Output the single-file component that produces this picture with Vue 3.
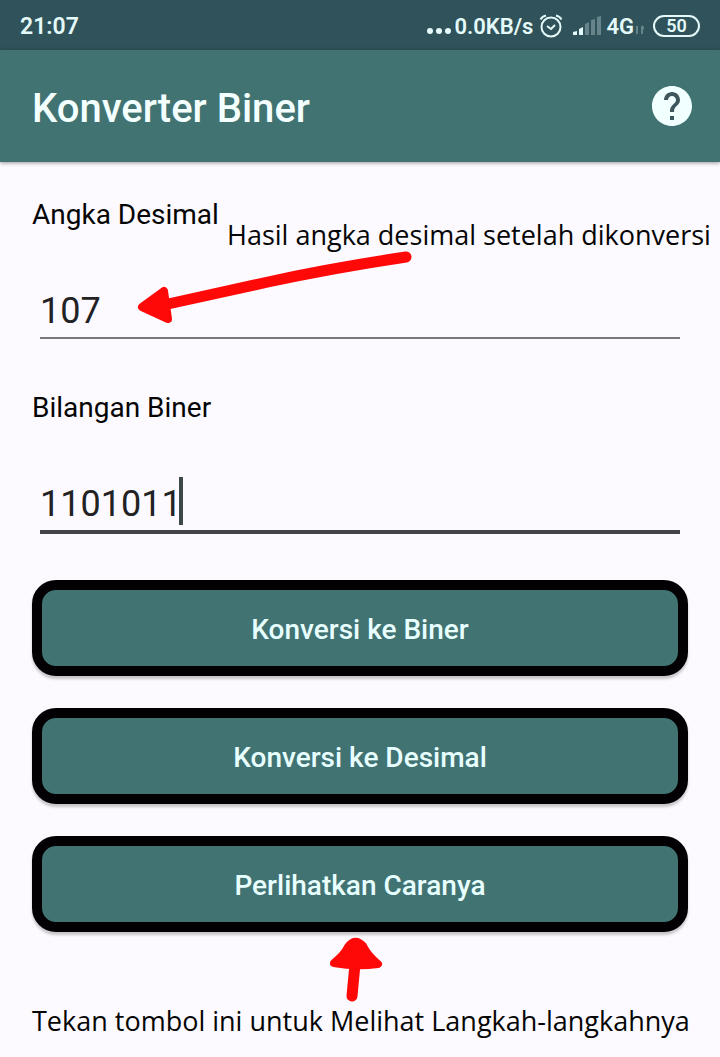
<script setup>
import { ref } from 'vue'

const decimal = ref('107')
const binary = ref('1101011')

function toBinary() {
  const n = parseInt(decimal.value, 10)
  if (!Number.isNaN(n)) binary.value = n.toString(2)
}

function toDecimal() {
  const n = parseInt(binary.value, 2)
  if (!Number.isNaN(n)) decimal.value = String(n)
}
</script>

<template>
  <div class="screen">
    <div class="status">
      <span>21:07</span>
      <div class="indicators">
        <svg class="dots" width="26" height="24" viewBox="0 0 26 24" aria-hidden="true">
          <circle cx="4" cy="17" r="3" /><circle cx="13" cy="17" r="3" /><circle cx="22" cy="17" r="3" />
        </svg>
        <span>0.0KB/s</span>
        <svg class="alarm" width="24" height="24" viewBox="0 0 24 24" aria-hidden="true">
          <circle cx="12" cy="13" r="9.5" />
          <path d="M1.500 5.500Q3 2.500 7 1.500M17 1.500Q21 2.500 22.500 5.500M8 12l4 3 4-4" />
        </svg>
        <svg class="signal" width="28" height="20" viewBox="0 0 28 20" aria-hidden="true">
          <path d="M0 19v-3l4-1v4zM6 19v-6l4-2v8z" />
          <path class="faint" d="M12 19V8l4-2v13zM18 19V4l4-1v16zM24 19V1l4-1v19z" />
        </svg>
        <span>4G</span>
        <svg class="data" width="8" height="20" viewBox="0 0 8 20" aria-hidden="true">
          <path d="M1 18v-8M0 15l1 3M6 18v-8M6 10l2 3" />
        </svg>
        <span class="battery">50</span>
      </div>
    </div>

    <header class="bar">
      <h1>Konverter Biner</h1>
      <button class="help" type="button" aria-label="Bantuan">
        <svg width="48" height="48" viewBox="0 0 24 24" aria-hidden="true">
          <circle class="mark" cx="12" cy="12" r="9" />
          <path d="M12 2C6.480 2 2 6.480 2 12s4.480 10 10 10 10-4.480 10-10S17.520 2 12 2zm1 17h-2v-2h2v2zm2.070-7.750l-.9.920C13.450 12.900 13 13.500 13 15h-2v-.5c0-1.100.45-2.100 1.170-2.830l1.240-1.260c.37-.36.59-.86.59-1.410 0-1.100-.9-2-2-2s-2 .9-2 2H8c0-2.210 1.790-4 4-4s4 1.790 4 4c0 .88-.36 1.680-.93 2.250z" />
        </svg>
      </button>
    </header>

    <main>
      <section class="field">
        <label for="decimal">Angka Desimal</label>
        <div class="entry">
          <input id="decimal" v-model="decimal" type="text" inputmode="numeric" />
        </div>
        <p class="note result-note">Hasil angka desimal setelah dikonversi</p>
        <svg class="result-arrow" width="284" height="80" viewBox="0 0 284 80" aria-hidden="true">
          <path class="shaft" d="M274 9Q200 20 136 34T36 56" />
          <path class="head" d="M10 59L32 43L36 71z" />
        </svg>
      </section>

      <section class="field active">
        <label for="binary">Bilangan Biner</label>
        <div class="entry">
          <input id="binary" v-model="binary" type="text" inputmode="numeric" />
          <span class="caret" :style="{ left: binary.length + 'ch' }"></span>
        </div>
      </section>

      <div class="actions">
        <button type="button" @click="toBinary">Konversi ke Biner</button>
        <button type="button" @click="toDecimal">Konversi ke Desimal</button>
        <button type="button">Perlihatkan Caranya</button>
      </div>

      <svg class="steps-arrow" width="60" height="72" viewBox="0 0 60 72" aria-hidden="true">
        <path class="shaft" d="M29 32L26 64" />
        <path class="head" d="M8 31Q18 23 22 15Q29 5 37 14Q42 24 52 32Q30 35 8 31z" />
      </svg>
      <p class="note">Tekan tombol ini untuk Melihat Langkah-langkahnya</p>
    </main>
  </div>
</template>

<style>
body {
  margin: 0;
  background: #fcfaff;
}
</style>

<style scoped>
.screen {
  min-height: 100vh;
  overflow-x: hidden;
  background: #fcfaff;
  color: #050505;
  font-family: Roboto, "Liberation Sans", sans-serif;
}

.status {
  display: flex;
  align-items: center;
  justify-content: space-between;
  height: 50px;
  padding: 2px 20px 0;
  box-sizing: border-box;
  background: #30525a;
  color: #e4fafa;
  font-size: 23px;
  font-weight: 600;
}

.indicators {
  display: flex;
  align-items: center;
  gap: 2px;
  font-size: 22px;
}

.dots {
  fill: #e4fafa;
}

.data {
  fill: none;
  stroke: #e4fafa;
  stroke-width: 2;
}

.alarm {
  margin: 0 8px 0 4px;
  fill: none;
  stroke: #e4fafa;
  stroke-width: 2;
}

.signal {
  margin-right: 3px;
  fill: #e4fafa;
}

.faint,
.data {
  opacity: 0.3;
}

.battery {
  width: 43px;
  height: 18px;
  margin-left: 7px;
  border: 2px solid #e4fafa;
  border-radius: 11px;
  font-size: 18px;
  line-height: 18px;
  text-align: center;
}

.bar {
  display: flex;
  align-items: center;
  justify-content: space-between;
  height: 112px;
  padding: 0 24px 0 32px;
  box-sizing: border-box;
  background: #417373;
  box-shadow: 0 1px 4px #00000066;
}

h1 {
  margin: 6px 0 0;
  color: #f4ffff;
  font-size: 40px;
  font-weight: 500;
  line-height: 48px;
}

.help {
  display: flex;
  padding: 0;
  border: 0;
  background: none;
  fill: #f2ffff;
}

.mark {
  fill: #3f555c;
}

main {
  padding: 37px 32px 16px;
}

.field {
  position: relative;
  height: 193px;
}

label {
  display: block;
  font-size: 28px;
  line-height: 32px;
}

.entry {
  position: relative;
  margin: 51px 8px 0;
  font-size: 36px;
}

input {
  display: block;
  width: 100%;
  height: 57px;
  padding: 2px 0 0;
  border: 0;
  border-bottom: 2px solid #77777b;
  border-radius: 0;
  box-sizing: border-box;
  outline: 0;
  background: none;
  color: #222224;
  font: inherit;
  caret-color: transparent;
}

.active input {
  height: 59px;
  border-bottom: 4px solid #444448;
}

.caret {
  position: absolute;
  top: 2px;
  width: 4px;
  height: 48px;
  margin-left: -3px;
  background: #3c4848;
}

.note {
  margin: 0;
  font-family: "Open Sans", "Noto Sans", sans-serif;
  font-size: 27px;
  line-height: 36px;
  white-space: nowrap;
}

.result-note {
  position: absolute;
  top: 18px;
  left: 195px;
}

.result-arrow {
  position: absolute;
  top: 49px;
  left: 100px;
  pointer-events: none;
}

.shaft {
  fill: none;
  stroke: #ff0808;
  stroke-width: 11;
  stroke-linecap: round;
}

.head {
  fill: #ff0808;
  stroke: #ff0808;
  stroke-width: 8;
  stroke-linejoin: round;
}

.actions {
  display: grid;
  gap: 32px;
  margin-top: -5px;
}

.actions button {
  height: 96px;
  padding: 4px 0 0;
  border: 10px solid #030004;
  border-radius: 24px;
  background: #417373;
  box-shadow: 0 3px 3px #00000038;
  color: #e8ffff;
  font: 500 28px/32px Roboto, "Liberation Sans", sans-serif;
}

.steps-arrow {
  display: block;
  margin: 0 auto -1px 294px;
}
</style>
